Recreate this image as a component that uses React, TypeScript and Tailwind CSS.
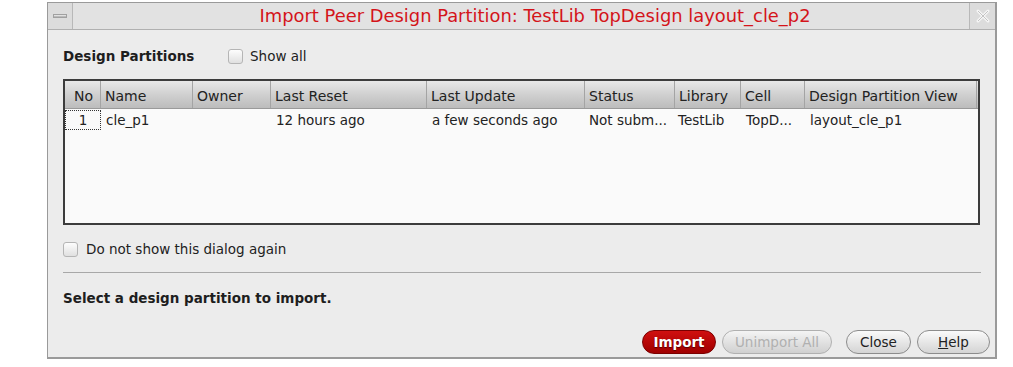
import React from "react";

const cols = [
  { label: "No", w: 34 },
  { label: "Name", w: 92 },
  { label: "Owner", w: 78 },
  { label: "Last Reset", w: 156 },
  { label: "Last Update", w: 158 },
  { label: "Status", w: 90 },
  { label: "Library", w: 66 },
  { label: "Cell", w: 64 },
  { label: "Design Partition View", w: 172 },
];

const row = ["1", "cle_p1", "", "12 hours ago", "a few seconds ago", "Not subm...", "TestLib", "TopD...", "layout_cle_p1"];

function Check() {
  return (
    <span className="inline-block w-[15px] h-[15px] rounded-[3px] border border-[#b5b5b5] bg-gradient-to-b from-[#fdfdfd] to-[#e0e0e0]" />
  );
}

function Btn({ children, cls }: { children: React.ReactNode; cls: string }) {
  return (
    <div className={"h-[24px] rounded-full flex items-center justify-center text-[13.5px] " + cls}>{children}</div>
  );
}

export default function App() {
  return (
    <div className="w-[1013px] h-[367px] bg-white relative" style={{ fontFamily: "'DejaVu Sans', sans-serif" }}>
      <div className="absolute left-[47px] top-[2px] w-[950px] h-[357px] border border-[#9a9a9a] border-b-2 border-r-2 bg-[#ececec] flex flex-col">
        {/* title bar */}
        <div className="h-[27px] flex items-stretch border-b border-[#b0b0b0] bg-[#e2e2e2]">
          <div className="w-[25px] border-r border-[#b8b8b8] flex items-center justify-center bg-[#dcdcdc]">
            <div className="w-[14px] h-[4px] bg-gradient-to-b from-[#f4f4f4] to-[#a8a8a8] border border-[#a0a0a0]" />
          </div>
          <div className="flex-1 flex items-center justify-center text-[17.9px] text-[#d4141a] pt-[1px] pl-[28px]">
            Import Peer Design Partition: TestLib TopDesign layout_cle_p2
          </div>
          <div className="w-[26px] border-l border-[#b8b8b8] flex items-center justify-center bg-[#dcdcdc]">
            <svg width="16" height="16" viewBox="0 0 16 16">
              <path d="M3 3 L13 13 M13 3 L3 13" stroke="#f6f6f6" strokeWidth="3" strokeLinecap="round" />
              <path d="M3 3 L13 13 M13 3 L3 13" stroke="#c4c4c4" strokeWidth="1" />
            </svg>
          </div>
        </div>

        <div className="flex flex-col pl-[15px] pr-[16px]">
          <div className="flex items-center h-[20px] mt-[16px]">
            <span className="text-[13.5px] font-bold text-[#1e1e1e] w-[165px]">Design Partitions</span>
            <Check />
            <span className="ml-[7px] text-[13.5px] text-[#222]">Show all</span>
          </div>

          <div className="mt-[13px] w-[917px] h-[146px] border-2 border-[#3c3c3c] bg-[#fafafa] flex flex-col">
            <div className="h-[28px] flex bg-gradient-to-b from-[#e8e8e8] via-[#d0d0d0] to-[#bcbcbc] border-b border-[#9a9a9a] pl-[2px]">
              {cols.map((c, i) => (
                <div
                  key={i}
                  style={{ width: c.w }}
                  className={"flex items-center text-[14px] text-[#222] pt-[3px] border-r border-[#a4a4a4] " + (i === 0 ? "justify-center" : "pl-[4px]")}
                >
                  {c.label}
                </div>
              ))}
            </div>
            <div className="flex h-[20px] mt-[1px]">
              {row.map((v, i) => (
                <div
                  key={i}
                  style={{ width: cols[i].w + (i === 0 ? 2 : 0) }}
                  className={"flex items-center text-[13.5px] text-[#222] " + (i === 0 ? "justify-center border border-dotted border-[#333]" : i === 5 ? "pl-[4px]" : i === 6 ? "pl-[3px]" : "pl-[5px]")}
                >
                  {v}
                </div>
              ))}
            </div>
          </div>

          <div className="flex items-center h-[20px] mt-[14px]">
            <Check />
            <span className="ml-[8px] text-[13.5px] text-[#222]">Do not show this dialog again</span>
          </div>

          <div className="mt-[13px] h-px bg-[#a8a8a8] w-[918px]" />

          <div className="mt-[15px] text-[13.5px] font-bold text-[#1e1e1e] h-[20px] leading-[20px]">
            Select a design partition to import.
          </div>
        </div>

        <div className="mt-auto mb-[3px] flex justify-end items-center pr-[5px]">
          <Btn cls="w-[74px] bg-gradient-to-b from-[#d01010] to-[#a00000] border border-[#7a0000] text-white font-bold [text-shadow:0_1px_1px_#500]">Import</Btn>
          <Btn cls="w-[110px] ml-[6px] bg-gradient-to-b from-[#f4f4f4] to-[#d0d0d0] border border-[#b0b0b0] text-[#b0b0b0]">Unimport All</Btn>
          <Btn cls="w-[65px] ml-[14px] bg-gradient-to-b from-[#fafafa] to-[#d4d4d4] border border-[#8c8c8c] text-[#222]">Close</Btn>
          <Btn cls="w-[73px] ml-[6px] bg-gradient-to-b from-[#fafafa] to-[#d4d4d4] border border-[#8c8c8c] text-[#222]">
            <span className="underline">H</span>elp
          </Btn>
        </div>
      </div>
    </div>
  );
}
